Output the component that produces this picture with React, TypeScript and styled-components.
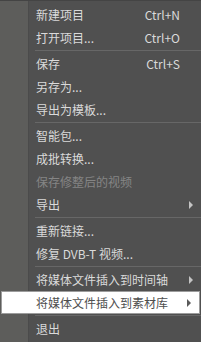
import styled, { createGlobalStyle } from "styled-components";

const GlobalStyle = createGlobalStyle`
  html, body {
    margin: 0;
    padding: 0;
    background: #505050;
  }
  body {
    font-family: "Noto Sans CJK SC", "Noto Sans", sans-serif;
  }
`;

type Entry =
  | { kind: "item"; label: string; shortcut?: string; submenu?: boolean; disabled?: boolean; active?: boolean }
  | { kind: "sep" };

const entries: Entry[] = [
  { kind: "item", label: "新建项目", shortcut: "Ctrl+N" },
  { kind: "item", label: "打开项目...", shortcut: "Ctrl+O" },
  { kind: "sep" },
  { kind: "item", label: "保存", shortcut: "Ctrl+S" },
  { kind: "item", label: "另存为..." },
  { kind: "item", label: "导出为模板..." },
  { kind: "sep" },
  { kind: "item", label: "智能包..." },
  { kind: "item", label: "成批转换..." },
  { kind: "item", label: "保存修整后的视频", disabled: true },
  { kind: "item", label: "导出", submenu: true },
  { kind: "sep" },
  { kind: "item", label: "重新链接..." },
  { kind: "item", label: "修复 DVB-T 视频..." },
  { kind: "sep" },
  { kind: "item", label: "将媒体文件插入到时间轴", submenu: true },
  { kind: "item", label: "将媒体文件插入到素材库", submenu: true, active: true },
  { kind: "sep" },
  { kind: "item", label: "退出" },
];

const Menu = styled.div`
  width: 201px;
  height: 342px;
  box-sizing: border-box;
  display: flex;
  flex-direction: column;
  padding-top: 2px;
  border-top: 1px solid #444444;
  background: linear-gradient(
    to right,
    #5d5d5b 0,
    #5d5d5b 28px,
    #4b4b4b 28px,
    #4b4b4b 29px,
    #505050 29px
  );
`;

const Item = styled.div<{ $active?: boolean; $disabled?: boolean }>`
  height: 23px;
  box-sizing: border-box;
  display: grid;
  grid-template-columns: 1fr auto 21px;
  align-items: center;
  font-size: 12px;
  line-height: 1;
  padding-left: ${(p) => (p.$active ? "34px" : "36px")};
  margin: ${(p) => (p.$active ? "0 1px" : "0")};
  border: ${(p) => (p.$active ? "1px solid #9c9c9c" : "none")};
  background: ${(p) => (p.$active ? "#ffffff" : "transparent")};
  color: ${(p) => (p.$active ? "#4e4e4e" : p.$disabled ? "#858585" : "#dadada")};
  white-space: nowrap;
`;

const Shortcut = styled.span`
  text-align: right;
`;

const Arrow = styled.span<{ $active?: boolean }>`
  width: 0;
  height: 0;
  margin-left: 9px;
  border-top: 4px solid transparent;
  border-bottom: 4px solid transparent;
  border-left: 4px solid ${(p) => (p.$active ? "#5a5a5a" : "#c4c4c4")};
`;

const Separator = styled.div`
  height: 3px;
  display: flex;
  align-items: center;
  padding-left: 35px;

  &::after {
    content: "";
    flex: 1;
    height: 1px;
    background: #676767;
  }
`;

export default function App() {
  return (
    <>
      <GlobalStyle />
      <Menu>
        {entries.map((e, i) =>
          e.kind === "sep" ? (
            <Separator key={i} />
          ) : (
            <Item key={i} $active={e.active} $disabled={e.disabled}>
              <span>{e.label}</span>
              <Shortcut>{e.shortcut ?? ""}</Shortcut>
              {e.submenu ? <Arrow $active={e.active} /> : <span />}
            </Item>
          )
        )}
      </Menu>
    </>
  );
}
